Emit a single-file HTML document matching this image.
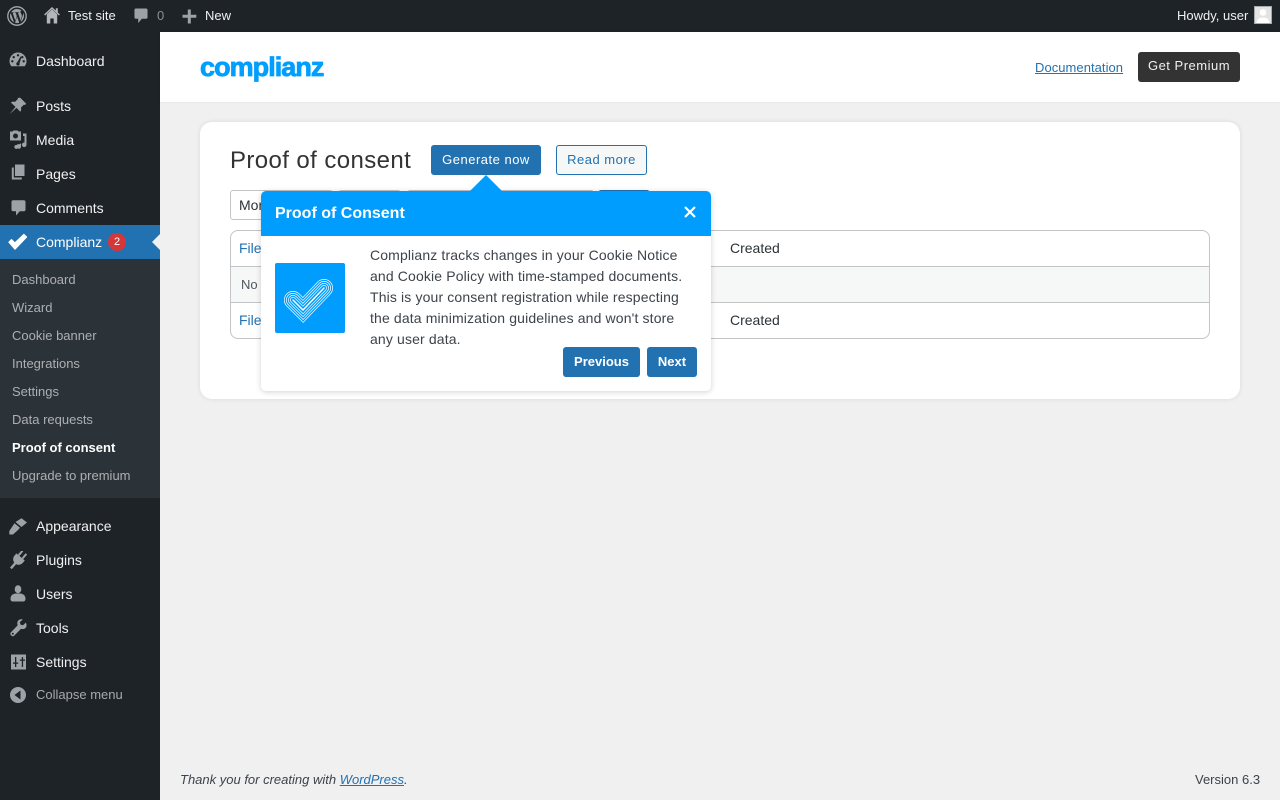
<!DOCTYPE html>
<html lang="en"><head><meta charset="utf-8"><title>Proof of consent</title>
<style>
*{box-sizing:border-box}
html,body{margin:0;padding:0;width:1280px;height:800px;overflow:hidden;background:#f0f0f1;font-family:"Liberation Sans",sans-serif;font-size:13px;color:#3c434a}
.a{position:absolute;white-space:nowrap}
svg{position:absolute;display:block}
#bar{position:absolute;left:0;top:0;width:1280px;height:32px;background:#1d2327}
#bar .a{color:#f0f0f1;font-size:13px;line-height:32px;top:0}
#side{position:absolute;left:0;top:32px;width:160px;height:768px;background:#1d2327}
.m{position:absolute;left:36px;color:#f0f0f1;font-size:14px;line-height:18px;white-space:nowrap}
.s{position:absolute;left:12px;color:#c3c4c7;opacity:.85;font-size:13px;line-height:18px;white-space:nowrap}
.i{fill:#9ca2a7}
.btn{position:absolute;border-radius:3px;font-size:13px;letter-spacing:.5px;text-align:center;white-space:nowrap}
</style></head><body>
<div id="bar">
<svg style="left:7px;top:6px" width="20" height="20" viewBox="0 0 20 20"><circle cx="10" cy="10" r="9.2" fill="none" stroke="#a7aaad" stroke-width="1.3"/><path class="i" d="M3 10c0 2.800 1.600 5.200 4 6.300L3.700 7.100C3.200 8 3 9 3 10zm11.700-.4c0-.9-.3-1.500-.6-2-.4-.6-.7-1.100-.7-1.700 0-.6.500-1.200 1.200-1.200h.1A7 7 0 0 0 4.100 6.300h.5c.7 0 1.900-.1 1.900-.1.400 0 .4.500 0 .6 0 0-.4 0-.8.100l2.600 7.700 1.500-4.600-1.100-3.100c-.4 0-.7-.1-.7-.1-.4 0-.3-.6 0-.6 0 0 1.200.1 1.900.1s1.900-.1 1.900-.1c.4 0 .4.500 0 .6 0 0-.4 0-.8.100l2.600 7.700.7-2.400c.3-1 .5-1.700.5-2.300zM10.100 10.600l-2.100 6.200a7 7 0 0 0 4.300-.1l-.1-.1-2.100-6zM16.100 6.600c.1.200.1.500.1.700 0 .7-.1 1.500-.5 2.500l-2.100 6.200A7 7 0 0 0 16.100 6.600z"/></svg>
<svg style="left:44px;top:7px" width="16" height="17" viewBox="0 0 16 17" fill="#b4b7ba"><path fill-rule="evenodd" d="M8 2.400 2.800 7.400V16.500H6.300V11.500H9.700V16.500H13.200V7.400z"/><path d="M8 0 .1 7.500l1 1L8 2l6.900 6.500 1-1L13.800 5.500V1.200H11.800V3.600z"/></svg>
<div class="a" style="left:68px">Test site</div>
<svg style="left:134px;top:8px" width="14" height="16" viewBox="0 0 15 17"><path class="i" d="M2 .5h11c.8 0 1.500.7 1.500 1.500v8c0 .8-.7 1.500-1.500 1.500H8.500L4.500 16v-4.500H2C1.200 11.500.5 10.800.5 10V2C.5 1.200 1.200.5 2 .5z"/></svg>
<div class="a" style="left:157px;color:#8c8f94">0</div>
<svg style="left:182px;top:9px" width="15" height="15" viewBox="0 0 15 15"><path class="i" d="M5.800.5h3v5.300h5.500v3H8.800v5.700h-3V8.800H.5v-3h5.300z"/></svg>
<div class="a" style="left:205px">New</div>
<div class="a" style="left:1177px">Howdy, user</div>
<div style="position:absolute;left:1254px;top:6px;width:18px;height:18px;background:#e3e3e3;border:1px solid #a7aaad;overflow:hidden"><svg style="left:0;top:0" width="16" height="16" viewBox="0 0 16 16"><circle cx="8" cy="5.500" r="3.300" fill="#fff"/><path fill="#fff" d="M1.500 16c.3-4 3-5.500 6.500-5.500s6.200 1.500 6.500 5.500z"/></svg></div>
</div>

<div id="side">
<div style="position:absolute;left:0;top:193px;width:160px;height:34px;background:#2271b1"></div>
<div style="position:absolute;left:0;top:227px;width:160px;height:239px;background:#2c3338"></div>
<div style="position:absolute;left:152px;top:202px;width:0;height:0;border:8px solid transparent;border-left:0;border-right:8px solid #f0f0f1"></div>

<svg style="left:9px;top:19px" width="18" height="18" viewBox="0 0 18 18"><path class="i" d="M9 1.500C4.300 1.500.5 5.300.5 10c0 2 .7 3.800 1.800 5.300h13.400c1.100-1.500 1.800-3.300 1.800-5.300 0-4.700-3.800-8.500-8.500-8.500z"/><g fill="#1d2327"><circle cx="9" cy="4.300" r="1.200"/><circle cx="4.700" cy="6.200" r="1.200"/><circle cx="13.300" cy="6.200" r="1.200"/><circle cx="3.300" cy="10.300" r="1.200"/><circle cx="14.700" cy="10.300" r="1.200"/><path d="M11.500 5.500l1 .5-2 6.200a1.700 1.700 0 1 1-2.300-.8z"/></g></svg>
<div class="m" style="top:20px">Dashboard</div>

<svg style="left:9px;top:65px" width="18" height="18" viewBox="0 0 18 18"><path class="i" d="M11.300.8l5.900 5.900-1.300 1.300-1-.4-3 3c.5 1.500.3 3-.6 4.100L7.500 10.900.5 17.300l6-7.400L1.900 5.500c1.100-.9 2.700-1.100 4.100-.6l3-3-.4-1z"/></svg>
<div class="m" style="top:65px">Posts</div>

<svg style="left:9px;top:98px" width="18" height="19" viewBox="0 0 18 19"><path class="i" d="M1 1.500h2.500L4.500.5h4l1 1H12v9H1zm5.500 2a2.500 2.500 0 1 0 0 5 2.500 2.500 0 0 0 0-5z"/><path class="i" d="M14 3.500h3.500v11.200a2.300 2.300 0 1 1-2-2.200V6H14zM8 14.500l4-1v3.300a2 2 0 1 1-1.800-2l.3 0v-.3l-1.200.3V17a2 2 0 1 1-1.300-2z"/></svg>
<div class="m" style="top:99px">Media</div>

<svg style="left:11px;top:132px" width="15" height="16" viewBox="0 0 15 16"><path class="i" d="M4 .5h9.500V12H4z"/><path class="i" d="M.8 3.500h2v10h8v2H.8z"/></svg>
<div class="m" style="top:133px">Pages</div>

<svg style="left:11px;top:168px" width="15" height="16" viewBox="0 0 15 16"><path class="i" d="M2 .2h11c.8 0 1.500.7 1.500 1.500v8c0 .8-.7 1.500-1.500 1.500H8.800L5 15.500v-4.300H2C1.200 11.200.5 10.500.5 9.700v-8C.5.900 1.200.2 2 .2z"/></svg>
<div class="m" style="top:167px">Comments</div>

<svg style="left:8px;top:201px" width="20" height="18" viewBox="0 0 20 18"><path fill="#fff" d="M.8 9.200l2.700-2.700 3.400 3.300L15.800 1.300l2.900 2.700L7 16.300z" stroke="#fff" stroke-width="1" stroke-linejoin="round"/></svg>
<div class="m" style="top:201px;color:#fff">Complianz</div>
<div class="a" style="left:108px;top:201px;width:18px;height:18px;border-radius:50%;background:#d63638;color:#fff;font-size:11px;line-height:18px;text-align:center">2</div>

<div class="s" style="top:239px">Dashboard</div>
<div class="s" style="top:267px">Wizard</div>
<div class="s" style="top:295px">Cookie banner</div>
<div class="s" style="top:323px">Integrations</div>
<div class="s" style="top:351px">Settings</div>
<div class="s" style="top:379px">Data requests</div>
<div class="s" style="top:407px;color:#fff;opacity:1;font-weight:700">Proof of consent</div>
<div class="s" style="top:435px">Upgrade to premium</div>

<svg style="left:9px;top:486px" width="18" height="17" viewBox="0 0 18 17"><path class="i" d="M6.500 4 12.500.3 18 4.500 12.500 9zM5.500 5.200 11 9.800 9 12 4 16.500H.3V13z"/></svg>
<div class="m" style="top:485px">Appearance</div>

<svg style="left:9px;top:519px" width="18" height="18" viewBox="0 0 18 18"><g class="i" transform="rotate(40 9 9)"><rect x="5.500" y="-1" width="2" height="6"/><rect x="10.500" y="-1" width="2" height="6"/><path d="M3.500 5h11v3c0 3-2.500 5.500-5.500 5.500S3.500 11 3.500 8z"/><rect x="7.800" y="13" width="2.400" height="7"/></g></svg>
<div class="m" style="top:519px">Plugins</div>

<svg style="left:10px;top:553px" width="16" height="17" viewBox="0 0 16 17"><ellipse cx="8" cy="4.200" rx="3.300" ry="4" class="i"/><path class="i" d="M5.500 8.500h5c3 .5 5 2 5 5.500 0 1.500-1 2.500-2.500 2.500H3C1.500 16.500.5 15.500.5 14c0-3.500 2-5 5-5.500z"/></svg>
<div class="m" style="top:553px">Users</div>

<svg style="left:10px;top:587px" width="17" height="18" viewBox="0 0 17 18"><path class="i" d="M16 3.500l-3 2.800-2.500-.7-.7-2.500L12.800.5C10.500-.2 8.300.6 7.500 2.800c-.4 1.200-.2 2.400.2 3.400L.8 13.500c-.6.700-.6 1.700 0 2.500l.8.800c.8.700 1.800.7 2.500 0l7-7c1 .4 2.200.5 3.300 0 2-.9 2.800-3.500 1.600-5.800zM2.800 15.800a1 1 0 1 1 0-2 1 1 0 0 1 0 2z"/></svg>
<div class="m" style="top:587px">Tools</div>

<svg style="left:11px;top:622px" width="15" height="16" viewBox="0 0 15 16"><path class="i" d="M0 .5h15v15H0z"/><path fill="#1d2327" d="M4 3h1.300v5.500H7.200v1.300H5.300V13H4V9.800H2V8.500h2zM10.800 3h1.300v2.500H14v1.300h-1.900V13h-1.300V6.800H8.800V5.500h2z"/></svg>
<div class="m" style="top:621px">Settings</div>

<svg style="left:10px;top:655px" width="16" height="16" viewBox="0 0 16 16"><path fill-rule="evenodd" class="i" d="M8 0a8 8 0 1 1 0 16A8 8 0 0 1 8 0zm2.500 3.500L4.500 8l6 4.500z"/></svg>
<div class="m" style="top:654px;font-size:13px;color:#a7aaad">Collapse menu</div>
</div>

<div style="position:absolute;left:160px;top:32px;width:1120px;height:70px;background:#fff;box-shadow:0 0 2px rgba(0,0,0,.08)"></div>
<div class="a" style="left:200px;top:49px;font-size:27px;line-height:36px;font-weight:700;color:#009fff;letter-spacing:-.95px;-webkit-text-stroke:.8px #009fff">complianz</div>
<div class="a" style="left:1035px;top:59px;color:#2271b1;text-decoration:underline;font-size:13px;line-height:17px;letter-spacing:.05px">Documentation</div>
<div class="btn" style="left:1138px;top:52px;width:102px;height:30px;background:#333;color:#f0f0f1;line-height:28px">Get Premium</div>

<div style="position:absolute;left:200px;top:122px;width:1040px;height:277px;background:#fff;border-radius:12px;box-shadow:0 0 5px rgba(0,0,0,.1)"></div>
<div class="a" style="left:230px;top:145px;font-size:24px;line-height:32px;color:#333;letter-spacing:.4px">Proof of consent</div>
<div class="btn" style="left:431px;top:145px;width:110px;height:30px;background:#2271b1;border:1px solid #2271b1;color:#fff;line-height:28px">Generate now</div>
<div class="btn" style="left:556px;top:145px;width:91px;height:30px;background:#f6f7f7;border:1px solid #2271b1;color:#2271b1;line-height:28px">Read more</div>

<div style="position:absolute;left:230px;top:190px;width:103px;height:30px;background:#fff;border:1px solid #c3c4c7;border-radius:3px;font-size:14px;line-height:28px;padding-left:8px;color:#2c3338">Mon</div>
<div style="position:absolute;left:338px;top:190px;width:63px;height:30px;background:#fff;border:1px solid #c3c4c7;border-radius:3px"></div>
<div style="position:absolute;left:407px;top:190px;width:187px;height:30px;background:#fff;border:1px solid #c3c4c7;border-radius:3px"></div>
<div style="position:absolute;left:598px;top:190px;width:52px;height:30px;background:#2271b1;border-radius:3px"></div>

<div style="position:absolute;left:230px;top:230px;width:980px;height:109px;background:#fff;border:1px solid #c3c4c7;border-radius:8px;overflow:hidden">
<div style="position:absolute;left:0;top:35px;width:978px;height:37px;background:#f6f7f7;border-top:1px solid #c3c4c7;border-bottom:1px solid #c3c4c7"></div>
<div class="a" style="left:8px;top:8px;font-size:14px;line-height:18px;color:#2271b1">File</div>
<div class="a" style="left:499px;top:8px;font-size:14px;line-height:18px;color:#2c3338">Created</div>
<div class="a" style="left:10px;top:45px;font-size:13px;line-height:18px;color:#50575e">No</div>
<div class="a" style="left:8px;top:80px;font-size:14px;line-height:18px;color:#2271b1">File</div>
<div class="a" style="left:499px;top:80px;font-size:14px;line-height:18px;color:#2c3338">Created</div>
</div>

<div style="position:absolute;left:261px;top:191px;width:450px;height:200px;background:#fff;border-radius:5px;box-shadow:0 1px 6px rgba(0,0,0,.18)"></div>
<div style="position:absolute;left:261px;top:191px;width:450px;height:45px;background:#009dff;border-radius:5px 5px 0 0"></div>
<div style="position:absolute;left:470px;top:175px;width:0;height:0;border-left:16px solid transparent;border-right:16px solid transparent;border-bottom:16px solid #009dff"></div>
<div class="a" style="left:275px;top:204px;font-size:16px;line-height:20px;font-weight:700;color:#fff">Proof of Consent</div>
<svg style="left:684px;top:206px" width="12" height="12" viewBox="0 0 12 12"><path d="M1 1l10 10M11 1 1 11" stroke="#fff" stroke-width="2.200" fill="none"/></svg>

<div style="position:absolute;left:275px;top:263px;width:70px;height:70px;background:#009dff;border-radius:2px"></div>
<svg style="left:275px;top:263px" width="70" height="70" viewBox="0 0 70 70" fill="none" stroke-linecap="round" stroke-linejoin="miter" stroke-miterlimit="4">
<path d="M18 37 28 47 49 25" stroke="#fff" stroke-width="18"/>
<path d="M18 37 28 47 49 25" stroke="#009dff" stroke-width="16.600"/>
<path d="M18 37 28 47 49 25" stroke="#fff" stroke-width="14"/>
<path d="M18 37 28 47 49 25" stroke="#009dff" stroke-width="12.600"/>
<path d="M18 37 28 47 49 25" stroke="#fff" stroke-width="10"/>
<path d="M18 37 28 47 49 25" stroke="#009dff" stroke-width="8.600"/>
<path d="M18 37 28 47 49 25" stroke="#fff" stroke-width="6"/>
<path d="M18 37 28 47 49 25" stroke="#009dff" stroke-width="4.600"/>
<path d="M18 37 28 47 49 25" stroke="#fff" stroke-width="1.500"/>
</svg>

<div style="position:absolute;left:370px;top:245px;width:330px;font-size:14px;line-height:21px;color:#3c434a;letter-spacing:.14px">Complianz tracks changes in your Cookie Notice<br>and Cookie Policy with time-stamped documents.<br>This is your consent registration while respecting<br>the data minimization guidelines and won't store<br>any user data.</div>
<div class="btn" style="left:563px;top:347px;width:77px;height:30px;background:#2271b1;color:#fff;font-weight:700;line-height:30px;letter-spacing:0">Previous</div>
<div class="btn" style="left:647px;top:347px;width:50px;height:30px;background:#2271b1;color:#fff;font-weight:700;line-height:30px;letter-spacing:0">Next</div>

<div class="a" style="left:180px;top:771px;font-size:13px;line-height:18px;font-style:italic;color:#3c434a">Thank you for creating with <span style="color:#2271b1;text-decoration:underline">WordPress</span>.</div>
<div class="a" style="left:1195px;top:771px;font-size:13px;line-height:18px;color:#3c434a">Version 6.3</div>
</body></html>
